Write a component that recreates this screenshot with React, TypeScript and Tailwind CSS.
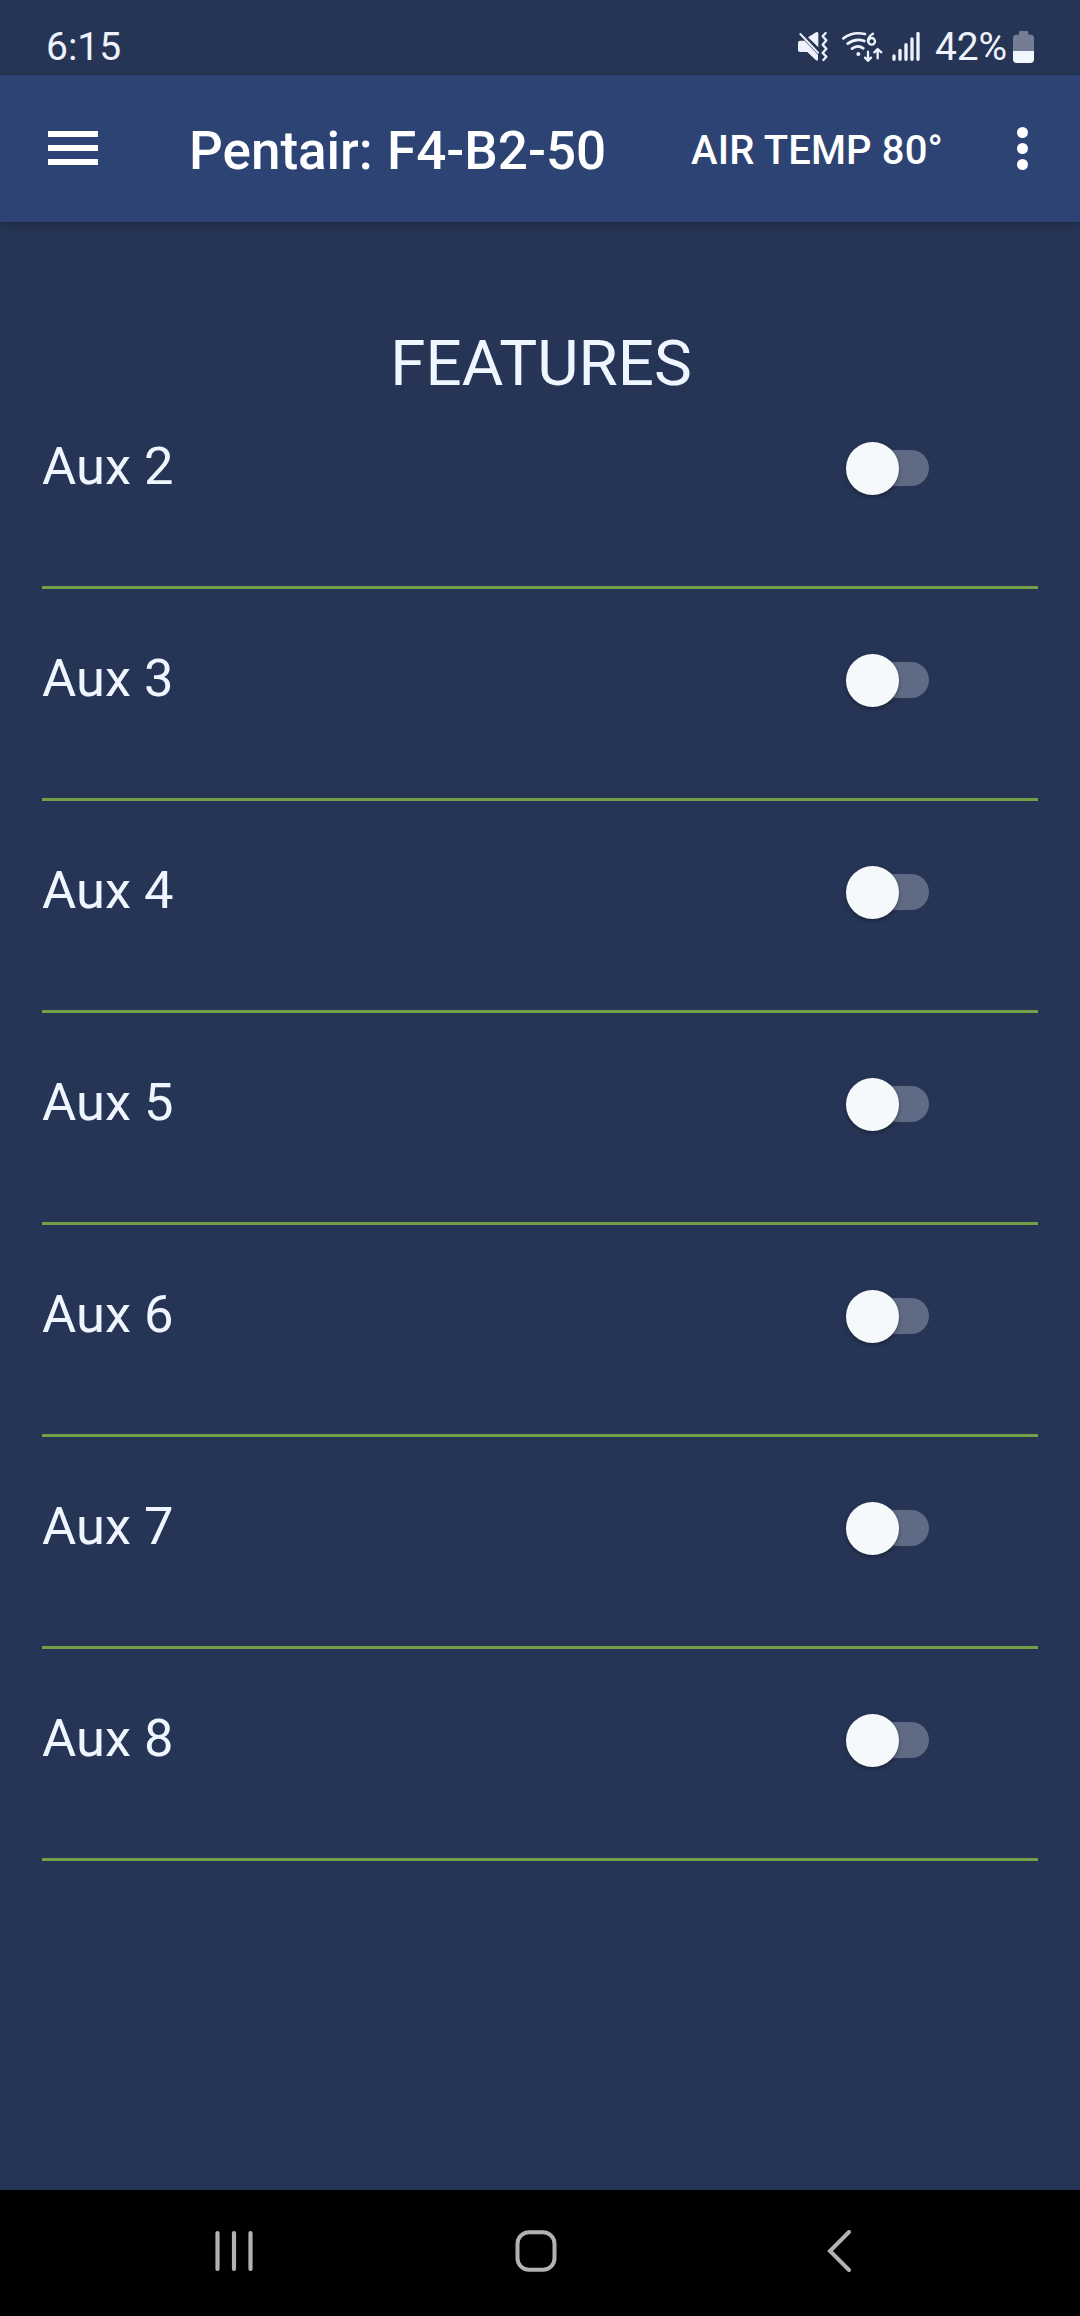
import { useState } from "react";

const FEATURES = ["Aux 2", "Aux 3", "Aux 4", "Aux 5", "Aux 6", "Aux 7", "Aux 8"];

function MuteIcon() {
    return (
        <svg className="h-[35px] w-[33px]" viewBox="51 30 99 105" fill="none">
            <path d="M60 62h14l40 42v14q0 7-6 3L82 96H60q-6 0-6-6V68q0-6 6-6z" fill="#eef2fc" />
            <path d="M84 52l24-15q7-3 7 4v41z" fill="#eef2fc" />
            <path d="M61 42l53 56" stroke="#eef2fc" strokeWidth="6" strokeLinecap="round" />
            <path d="M137 39l-9 10 11 12-11 13 11 12-11 13 11 11-9 10" stroke="#eef2fc" strokeWidth="7" strokeLinecap="round" strokeLinejoin="round" />
        </svg>
    );
}

function WifiIcon() {
    return (
        <svg className="h-[35px] w-[43px]" viewBox="183 30 129 105" fill="none" stroke="#eef2fc" strokeWidth="8" strokeLinecap="round" strokeLinejoin="round">
            <path d="M190 55Q218 34 255 42" />
            <path d="M203 71Q227 53 253 63" />
            <path d="M216 86Q233 73 250 85" />
            <circle cx="235" cy="102" r="6" fill="#eef2fc" stroke="none" />
            <path d="M279 41Q264 49 264 64" strokeWidth="7" />
            <circle cx="275" cy="64" r="10" strokeWidth="7" />
            <path d="M264 95v27M255 113l9 9 9-9" strokeWidth="7" />
            <path d="M293 115V88M283 97l10-10 11 10" strokeWidth="7" />
        </svg>
    );
}

function SignalIcon() {
    return (
        <svg className="h-[35px] w-[30px]" viewBox="333 30 90 105" stroke="#eef2fc" strokeWidth="10" strokeLinecap="round">
            <path d="M342 108v10M360 91v27M378 74v44M396 57v61M414 40v78" />
        </svg>
    );
}

function BatteryIcon() {
    return (
        <svg className="h-[35px] w-[23px]" viewBox="696 30 69 105">
            <path d="M717 44v-7q0-4 4-4h20q4 0 4 4v7h7q10 0 10 10v39h-63V54q0-10 10-10z" fill="#747d94" />
            <path d="M699 93h63v25q0 11-11 11h-41q-11 0-11-11z" fill="#f4f6fd" />
        </svg>
    );
}

function StatusBar() {
    return (
        <div className="flex h-[75px] items-start justify-between pt-[30px] pr-[45px] pl-[46px] text-[39px] leading-[34px] text-[#eef2fc]">
            <span>6:15</span>
            <div className="flex">
                <MuteIcon />
                <div className="ml-[11px] flex">
                    <WifiIcon />
                </div>
                <div className="ml-[7px] flex">
                    <SignalIcon />
                </div>
                <span className="ml-[14px] w-[77px] tracking-[-0.2px] whitespace-nowrap">42%</span>
                <BatteryIcon />
            </div>
        </div>
    );
}

function AppBar() {
    return (
        <header className="flex h-[147px] items-start bg-[#2c4373] font-medium text-white shadow-[0_2px_8px_rgba(0,0,0,0.25)]">
            <button aria-label="Menu" className="mt-[56px] ml-[48px] flex w-[50px] flex-col gap-[8px]">
                <span className="h-[6px] bg-white" />
                <span className="h-[6px] bg-white" />
                <span className="h-[6px] bg-white" />
            </button>
            <h1 className="mt-[46px] ml-[91px] w-[502px] text-[53px] leading-[60px] [word-spacing:1px] whitespace-nowrap">
                Pentair: F4-B2-50
            </h1>
            <span className="mt-[51px] w-[320px] text-[40px] leading-[50px] tracking-[0.15px] whitespace-nowrap">AIR TEMP 80°</span>
            <button aria-label="More options" className="mt-[52px] ml-[6px] flex flex-col gap-[5px]">
                <span className="size-[11px] rounded-full bg-white" />
                <span className="size-[11px] rounded-full bg-white" />
                <span className="size-[11px] rounded-full bg-white" />
            </button>
        </header>
    );
}

function FeatureRow({ name }: { name: string }) {
    const [isOn, setIsOn] = useState(false);

    return (
        <li className="flex h-[194px] items-start justify-between border-b-[3px] border-[#739f48] pt-[41px]">
            <span className="text-[52.5px] leading-[60px] text-[#f0f6ff]">{name}</span>
            <button
                role="switch"
                aria-checked={isOn}
                aria-label={name}
                onClick={() => setIsOn(!isOn)}
                className={`mt-[14px] mr-[109px] flex h-[36px] w-[75px] items-center rounded-full ${isOn ? "justify-end bg-[#739f48]" : "bg-[#5f6a84]"}`}
            >
                <span className="-ml-[8px] size-[53px] shrink-0 rounded-full bg-[#f5f9fb] shadow-[0_2px_4px_rgba(0,0,0,0.3)]" />
            </button>
        </li>
    );
}

function NavBar() {
    return (
        <nav className="flex h-[126px] items-start bg-black pt-[40px] text-[#b2b2b2]">
            <svg className="ml-[214px] h-[42px] w-[40px]" viewBox="0 0 40 42" stroke="currentColor" strokeWidth="4.2" strokeLinecap="round">
                <path d="M3.5 3v36M20 3v36M36.5 3v36" />
            </svg>
            <svg className="ml-[260px] h-[42px] w-[44px]" viewBox="0 0 44 42" fill="none" stroke="currentColor" strokeWidth="4">
                <rect x="3.5" y="2.3" width="37" height="37.5" rx="11.5" />
            </svg>
            <svg className="ml-[268px] h-[42px] w-[28px]" viewBox="0 0 28 42" fill="none" stroke="currentColor" strokeWidth="4" strokeLinecap="round">
                <path d="M23 2L4 21l19 19" />
            </svg>
        </nav>
    );
}

export default function App() {
    return (
        <div className="flex h-[2316px] w-[1080px] flex-col overflow-hidden bg-[#263555] font-[Roboto,sans-serif]">
            <StatusBar />
            <AppBar />
            <main className="flex-1 px-[42px] pt-[109px]">
                <h2 className="pl-[2px] text-center text-[63.7px] leading-[66px] text-[#f0f6ff]">FEATURES</h2>
                <ul className="-mt-[2px] flex flex-col gap-[18px]">
                    {FEATURES.map((name) => (
                        <FeatureRow key={name} name={name} />
                    ))}
                </ul>
            </main>
            <NavBar />
        </div>
    );
}
